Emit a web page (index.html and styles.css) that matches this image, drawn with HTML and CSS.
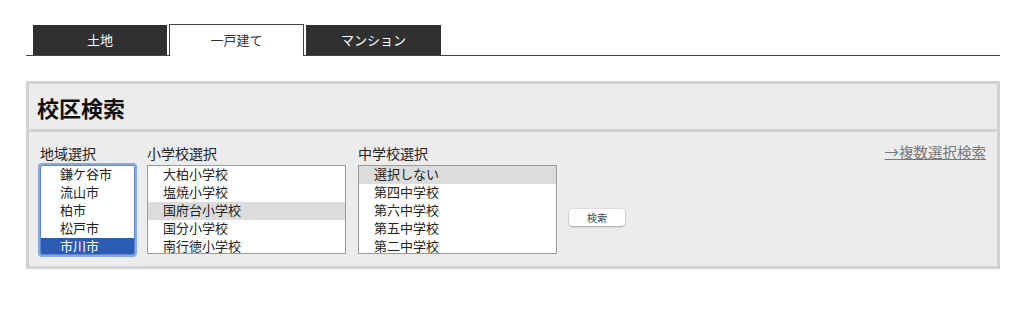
FILE: index.html
```html
<!DOCTYPE html>
<html lang="ja">
<head>
    <meta charset="UTF-8">
    <meta name="viewport" content="width=device-width, initial-scale=1.0">
    <title>校区検索</title>
    <link rel="stylesheet" href="styles.css">
</head>
<body>
    <div class="page">
        <div class="tabs">
            <div class="tab">土地</div>
            <div class="tab active">一戸建て</div>
            <div class="tab">マンション</div>
        </div>

        <div class="search-box">
            <div class="search-head">
                <h2>校区検索</h2>
            </div>
            <div class="search-body">
                <div class="field">
                    <div class="field-label">地域選択</div>
                    <div class="list-box focused area-list">
                        <div class="opt">鎌ケ谷市</div>
                        <div class="opt">流山市</div>
                        <div class="opt">柏市</div>
                        <div class="opt">松戸市</div>
                        <div class="opt selected">市川市</div>
                    </div>
                </div>
                <div class="field">
                    <div class="field-label">小学校選択</div>
                    <div class="list-box school-list">
                        <div class="opt">大柏小学校</div>
                        <div class="opt">塩焼小学校</div>
                        <div class="opt hover">国府台小学校</div>
                        <div class="opt">国分小学校</div>
                        <div class="opt">南行徳小学校</div>
                    </div>
                </div>
                <div class="field">
                    <div class="field-label">中学校選択</div>
                    <div class="list-box school-list">
                        <div class="opt hover">選択しない</div>
                        <div class="opt">第四中学校</div>
                        <div class="opt">第六中学校</div>
                        <div class="opt">第五中学校</div>
                        <div class="opt">第二中学校</div>
                    </div>
                </div>
                <button class="search-button">検索</button>
                <a class="multi-link" href="#">→複数選択検索</a>
            </div>
        </div>
    </div>
</body>
</html>
```

FILE: styles.css
```css
body {
    margin: 0;
    background: #fff;
    color: #222;
    font-family: "Noto Sans CJK JP", "Noto Sans", sans-serif;
}

.page {
    width: 974px;
    padding: 24px 0 0 26px;
}

/* Tabs */
.tabs {
    display: flex;
    gap: 2px;
    height: 31px;
    padding-left: 7px;
    border-bottom: 1px solid #444;
}

.tab {
    box-sizing: border-box;
    width: 135px;
    height: 30px;
    margin-top: 1px;
    background: #303030;
    color: #fff;
    font-size: 13px;
    line-height: 30px;
    text-align: center;
}

.tab:first-child {
    width: 134px;
}

.tab.active {
    height: 32px;
    margin-top: 0;
    background: #fff;
    color: #333;
    border: 1px solid #444;
    border-bottom: none;
    line-height: 29px;
}

/* Search box */
.search-box {
    margin-top: 25px;
    border: 3px solid #d2d2d2;
    background: #ececec;
}

.search-head {
    height: 45px;
    border-bottom: 3px solid #d2d2d2;
    display: flex;
    align-items: center;
    padding-left: 8px;
}

.search-head h2 {
    margin: 0;
    font-size: 22px;
    font-weight: bold;
    color: #111;
}

.search-body {
    display: flex;
    align-items: flex-start;
    gap: 12px;
    height: 123px;
    padding: 11px 11px 0 11px;
}

.field-label {
    font-size: 14px;
    line-height: 20px;
    margin-bottom: 2px;
}

.list-box {
    box-sizing: border-box;
    height: 90px;
    background: #fff;
    border: 1px solid #9a9a9a;
    overflow: hidden;
}

.area-list {
    width: 95px;
}

.list-box.focused {
    border: 1px solid #5d87d0;
    border-radius: 2px;
    box-shadow: 0 0 0 2px #86a9e2;
}

.school-list {
    width: 199px;
    margin-top: 1px;
    height: 89px;
}

.opt {
    height: 18px;
    line-height: 15px;
    font-size: 13px;
    padding-left: 15px;
    white-space: nowrap;
}

.area-list .opt {
    padding-left: 19px;
    line-height: 16px;
}

.opt.hover {
    background: #dcdcdc;
}

.opt.selected {
    background: #2b5bb2;
    color: #fff;
    height: 16px;
}

.search-button {
    margin-top: 66px;
    width: 56px;
    height: 17px;
    padding: 0;
    border: none;
    border-radius: 4px;
    background: #fff;
    box-shadow: 0 1px 2px rgba(0, 0, 0, 0.25), 0 0 0 0.5px rgba(0, 0, 0, 0.12);
    font-family: inherit;
    font-size: 10px;
    color: #444;
}

.multi-link {
    margin-left: auto;
    font-size: 14.5px;
    line-height: 18px;
    color: #777;
    text-decoration: underline;
}
```
